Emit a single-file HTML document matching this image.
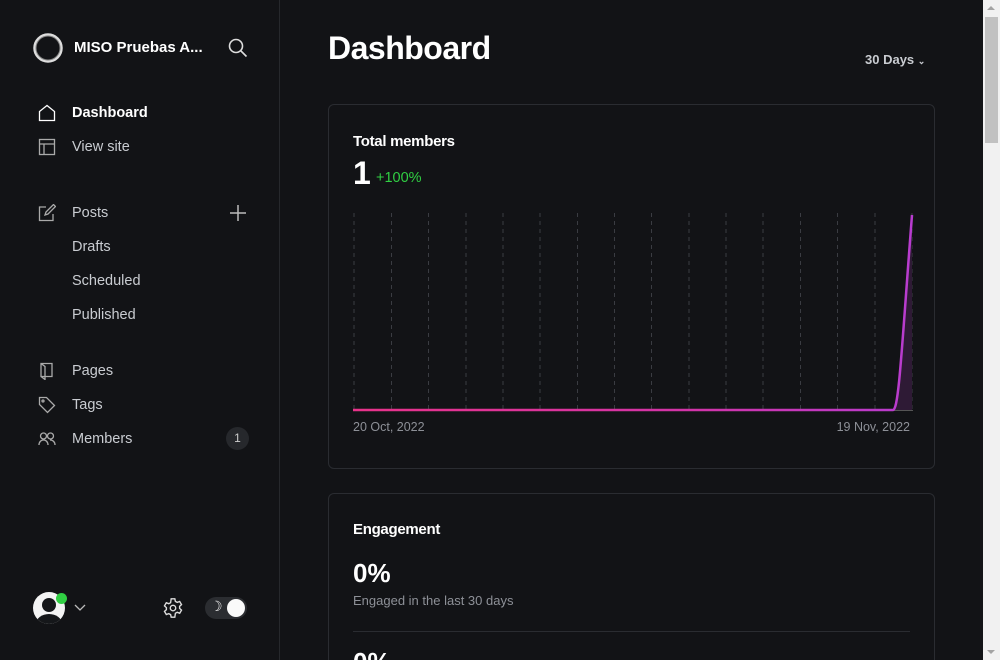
<!DOCTYPE html>
<html style="height:660px;overflow:hidden"><head><style>
*{margin:0;padding:0;box-sizing:border-box}
body{width:1000px;height:660px;overflow:hidden;background:#121316;font-family:"Liberation Sans",sans-serif;color:#fff;position:relative}
.side{position:absolute;left:0;top:0;width:280px;height:660px;border-right:1px solid #26282c;background:#121316}
.nav{position:absolute;left:72px;font-size:14.5px;color:#c9ccd1}
.ic{position:absolute;left:38px}
.main{position:absolute;left:280px;top:0;width:703px;height:660px;overflow:hidden}
.card{position:absolute;left:48px;width:607px;border:1px solid #2a2c31;border-radius:6px}
.sb{position:absolute;right:0;top:0;width:17px;height:660px;background:#f1f1f1}
</style></head><body>
<div class="side">
<svg style="position:absolute;left:32px;top:32px" width="32" height="32" viewBox="0 0 32 32"><circle cx="16" cy="16" r="13.5" fill="none" stroke="#ddd" stroke-width="2.5"/><circle cx="16" cy="16" r="12" fill="none" stroke="#888" stroke-width="1"/></svg>
<div style="position:absolute;left:74px;top:39px;font-size:15px;font-weight:bold">MISO Pruebas A...</div>
<svg style="position:absolute;left:228px;top:38px" width="20" height="20" viewBox="0 0 20 20" fill="none" stroke="#ddd" stroke-width="1.6"><circle cx="8" cy="8" r="6.5"/><path d="M13 13l5.5 5.5"/></svg>

<svg class="ic" style="top:104px" width="18" height="18" viewBox="0 0 18 18" fill="none" stroke="#fff" stroke-width="1.3"><path d="M1.5 16.5V7.5L9 1.5l7.5 6v9z"/></svg>
<div class="nav" style="top:105px;color:#fff;font-weight:bold">Dashboard</div>
<svg class="ic" style="top:138px" width="18" height="18" viewBox="0 0 18 18" fill="none" stroke="#aaa" stroke-width="1.3"><rect x="1.5" y="1.5" width="15" height="15"/><path d="M1.5 6h15M6 6v10.5"/></svg>
<div class="nav" style="top:139px">View site</div>

<svg class="ic" style="top:204px" width="18" height="18" viewBox="0 0 18 18" fill="none" stroke="#aaa" stroke-width="1.3"><path d="M8 3H1.5v13.5H15V10M7 11l1-3 7.5-7.5 2 2L10 10z"/></svg>
<div class="nav" style="top:205px">Posts</div>
<svg style="position:absolute;left:229px;top:204px" width="18" height="18" viewBox="0 0 18 18" stroke="#bbb" stroke-width="1.5"><path d="M9 1v16M1 9h16"/></svg>
<div class="nav" style="top:239px">Drafts</div>
<div class="nav" style="top:273px">Scheduled</div>
<div class="nav" style="top:307px">Published</div>

<svg class="ic" style="top:362px" width="18" height="18" viewBox="0 0 18 18" fill="none" stroke="#aaa" stroke-width="1.3"><path d="M3 1.5h11v13H3zM3 1.5l4 3v13l-4-3"/></svg>
<div class="nav" style="top:363px">Pages</div>
<svg class="ic" style="top:396px" width="18" height="18" viewBox="0 0 18 18" fill="none" stroke="#aaa" stroke-width="1.3"><path d="M1.5 1.5h7l8 8-7 7-8-8z"/><circle cx="5" cy="5" r="1"/></svg>
<div class="nav" style="top:397px">Tags</div>
<svg class="ic" style="top:431px" width="18" height="16" viewBox="0 0 18 16" fill="none" stroke="#aaa" stroke-width="1.3"><circle cx="5.5" cy="5" r="3"/><path d="M1 14c0-3 2-5 4.5-5S10 11 10 14"/><circle cx="12.5" cy="5" r="3"/><path d="M12 9c3 0 5 2 5 5"/></svg>
<div class="nav" style="top:431px">Members</div>
<div style="position:absolute;left:226px;top:427px;width:23px;height:23px;border-radius:50%;background:#26282c;color:#ccc;font-size:12px;text-align:center;line-height:23px">1</div>

<div style="position:absolute;left:33px;top:592px;width:32px;height:32px;border-radius:50%;background:#f4f4f4;overflow:hidden"><div style="position:absolute;left:9px;top:6px;width:14px;height:14px;border-radius:50%;background:#15171a"></div><div style="position:absolute;left:3px;top:22px;width:26px;height:20px;border-radius:50%;background:#15171a"></div></div>
<div style="position:absolute;left:56px;top:593px;width:11px;height:11px;border-radius:50%;background:#30cf43"></div>
<svg style="position:absolute;left:74px;top:604px" width="12" height="8" viewBox="0 0 12 8" fill="none" stroke="#bbb" stroke-width="1.3"><path d="M1 1l5 5 5-5"/></svg>
<svg style="position:absolute;left:162px;top:597px" width="22" height="22" viewBox="0 0 24 24" fill="none" stroke="#ddd" stroke-width="1.5"><circle cx="12" cy="12" r="3"/><path d="M10 2h4l.6 2.8 2 1.1 2.7-1 2 3.4-2.1 1.9v2.2l2.1 1.9-2 3.4-2.7-1-2 1.1L14 22h-4l-.6-2.8-2-1.1-2.7 1-2-3.4 2.1-1.9v-2.2L2.7 9.7l2-3.4 2.7 1 2-1.1z"/></svg>
<div style="position:absolute;left:205px;top:597px;width:42px;height:22px;border-radius:11px;background:#2b2d31"></div>
<div style="position:absolute;left:210px;top:598px;font-size:14px;color:#eee">☽</div>
<div style="position:absolute;left:227px;top:599px;width:18px;height:18px;border-radius:50%;background:#fafafa"></div>
</div>

<div class="main">
<div style="position:absolute;left:48px;top:30px;font-size:32px;font-weight:bold;letter-spacing:-0.5px">Dashboard</div>
<div style="position:absolute;left:585px;top:52px;font-size:13px;font-weight:bold;color:#c9ccd1">30 Days <span style="font-size:9px">⌄</span></div>
<div class="card" style="top:104px;height:365px">
<div style="position:absolute;left:24px;top:28px;font-size:15px;font-weight:bold;letter-spacing:-0.3px">Total members</div>
<div style="position:absolute;left:24px;top:50px;font-size:32px;font-weight:bold">1</div>
<div style="position:absolute;left:47px;top:65px;font-size:14.5px;color:#30cf43">+100%</div>
<svg style="position:absolute;left:24px;top:108px" width="562" height="200" viewBox="0 0 562 200">
<g stroke="#3a3c42" stroke-dasharray="4 4" stroke-width="1">
<path d="M1 0v197M38.5 0v197M75.5 0v197M113 0v197M150 0v197M187 0v197M224.5 0v197M261.5 0v197M298.5 0v197M336 0v197M373 0v197M410 0v197M447.5 0v197M484.5 0v197M522 0v197M559 0v197"/></g>
<path d="M0 197.5H560" stroke="#555" stroke-width="1"/>
<path d="M542 197 C546 195 549 130 559 2 V197Z" fill="#2e1a35"/>
<defs><linearGradient id="g" x1="0" x2="1"><stop offset="0" stop-color="#e8338a"/><stop offset=".6" stop-color="#d234a8"/><stop offset="1" stop-color="#b83ccf"/></linearGradient></defs>
<path d="M0 197 H540 C546 197 549 130 559 2" fill="none" stroke="url(#g)" stroke-width="2.5"/>
</svg>
<div style="position:absolute;left:24px;top:315px;font-size:12.5px;color:#8d9097">20 Oct, 2022</div>
<div style="position:absolute;right:24px;top:315px;font-size:12.5px;color:#8d9097">19 Nov, 2022</div>
</div>
<div class="card" style="top:493px;height:200px">
<div style="position:absolute;left:24px;top:27px;font-size:15px;font-weight:bold;letter-spacing:-0.3px">Engagement</div>
<div style="position:absolute;left:24px;top:64px;font-size:26px;font-weight:bold">0%</div>
<div style="position:absolute;left:24px;top:99px;font-size:13px;color:#8d9097">Engaged in the last 30 days</div>
<div style="position:absolute;left:24px;right:24px;top:137px;border-top:1px solid #2a2c31"></div>
<div style="position:absolute;left:24px;top:153px;font-size:26px;font-weight:bold">0%</div>
</div>
</div>
<div class="sb"><div style="position:absolute;left:2px;top:17px;width:13px;height:126px;background:#c1c1c1"></div>
<div style="position:absolute;left:4px;top:6px;border:4.5px solid transparent;border-bottom:4.5px solid #a3a3a3;border-top:0"></div>
<div style="position:absolute;left:4px;bottom:6px;border:4.5px solid transparent;border-top:4.5px solid #a3a3a3;border-bottom:0"></div></div>
</body></html>
